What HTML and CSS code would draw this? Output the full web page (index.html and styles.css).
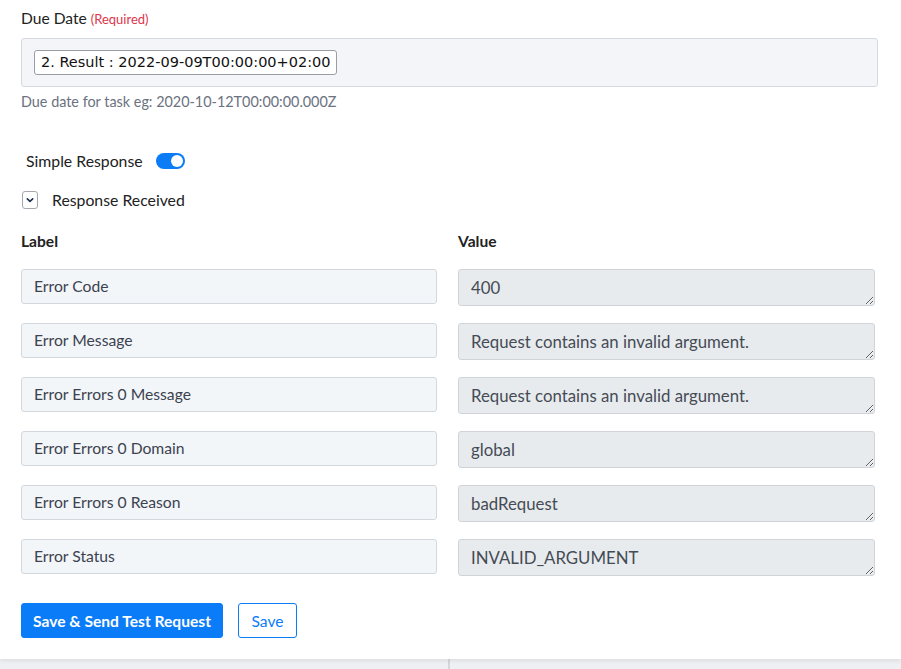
FILE: index.html
```html
<!DOCTYPE html>
<html>
<head>
<meta charset="utf-8">
<link rel="stylesheet" href="styles.css">
</head>
<body>
<div class="card">
  <div class="field">
    <div class="field-label">Due Date <span class="req">(Required)</span></div>
    <div class="token-box"><span class="token">2. Result : 2022-09-09T00:00:00+02:00</span></div>
    <div class="help">Due date for task eg: 2020-10-12T00:00:00.000Z</div>
  </div>

  <div class="toggle-row">
    <span>Simple Response</span>
    <span class="switch"><span class="knob"></span></span>
  </div>

  <div class="collapse-row">
    <span class="chev"><svg width="10" height="10" viewBox="0 0 10 10"><path d="M2.3 3.8 L5 6.4 L7.7 3.8" fill="none" stroke="#1f2d4d" stroke-width="1.6" stroke-linecap="round" stroke-linejoin="round"/></svg></span>
    <span>Response Received</span>
  </div>

  <div class="grid">
    <div class="col-head">Label</div>
    <div class="col-head">Value</div>

    <div class="lbl">Error Code</div>
    <textarea class="val" readonly>400</textarea>

    <div class="lbl">Error Message</div>
    <textarea class="val" readonly>Request contains an invalid argument.</textarea>

    <div class="lbl">Error Errors 0 Message</div>
    <textarea class="val" readonly>Request contains an invalid argument.</textarea>

    <div class="lbl">Error Errors 0 Domain</div>
    <textarea class="val" readonly>global</textarea>

    <div class="lbl">Error Errors 0 Reason</div>
    <textarea class="val" readonly>badRequest</textarea>

    <div class="lbl">Error Status</div>
    <textarea class="val" readonly>INVALID_ARGUMENT</textarea>
  </div>

  <div class="actions">
    <button class="btn primary">Save &amp; Send Test Request</button>
    <button class="btn outline">Save</button>
  </div>
</div>
<div class="below">
  <div class="below-left"></div>
  <div class="below-right"></div>
</div>
</body>
</html>
```

FILE: styles.css
```css
html, body {
  margin: 0;
  padding: 0;
  background: #eef0f3;
  font-family: Lato, "Open Sans", sans-serif;
  color: #2b2f36;
}
.card {
  background: #fff;
  padding: 8px 23px 21px 21px;
  box-shadow: 0 2px 4px rgba(0,0,0,0.08);
  position: relative;
}
.field-label {
  font-size: 15.6px;
  line-height: 20px;
  color: #222;
}
.req {
  font-size: 13px;
  color: #e0354a;
}
.token-box {
  margin-top: 9px;
  background: #f3f5f8;
  border: 1px solid #d6dade;
  border-radius: 3px;
  padding: 11px 12px 11px;
  height: 25px;
}
.token {
  display: inline-block;
  box-sizing: border-box;
  height: 25px;
  line-height: 23px;
  padding: 0 5px 0 6px;
  background: #fff;
  border: 1px solid #9a9ea4;
  border-radius: 3px;
  font-family: "DejaVu Sans", sans-serif;
  font-size: 14.5px;
  color: #111;
  vertical-align: top;
}
.help {
  margin-top: 6px;
  font-size: 14.4px;
  line-height: 18px;
  color: #6b7280;
}
.toggle-row {
  margin-top: 40px;
  margin-left: 5px;
  display: flex;
  align-items: center;
  gap: 13px;
  font-size: 15.8px;
  line-height: 20px;
  color: #222;
}
.switch {
  width: 29px;
  height: 16px;
  border-radius: 8px;
  background: #0b7cf5;
  display: flex;
  align-items: center;
  justify-content: flex-end;
  padding: 0 2px;
  box-sizing: border-box;
}
.knob {
  width: 12px;
  height: 12px;
  border-radius: 50%;
  background: #fff;
}
.collapse-row {
  margin-top: 19px;
  margin-left: 1px;
  display: flex;
  align-items: center;
  gap: 14px;
  font-size: 15.8px;
  line-height: 20px;
  color: #222;
}
.chev {
  width: 14px;
  height: 16px;
  border: 1px solid #a3a8b0;
  border-radius: 3px;
  display: flex;
  align-items: center;
  justify-content: center;
}
.grid {
  margin-top: 21px;
  margin-right: 3px;
  display: grid;
  grid-template-columns: 416px 417px;
  column-gap: 21px;
  row-gap: 17px;
  align-items: start;
}
.col-head {
  font-weight: 700;
  font-size: 15.6px;
  line-height: 20px;
  color: #222;
  margin-bottom: 1px;
}
.lbl {
  box-sizing: border-box;
  height: 35px;
  border: 1px solid #d3d8de;
  border-radius: 3px;
  background: #f3f6f9;
  padding: 0 12px;
  font-size: 15.7px;
  line-height: 33px;
  color: #3c4250;
}
.val {
  box-sizing: border-box;
  width: 417px;
  height: 37px;
  margin: 0;
  border: 1px solid #d0d4d9;
  border-radius: 3px;
  background: #e8ebee;
  padding: 6px 12px;
  font-family: Lato, "Open Sans", sans-serif;
  font-size: 16.8px;
  line-height: 23px;
  color: #454b55;
  resize: vertical;
  overflow: hidden;
  outline: none;
  display: block;
}
.actions {
  margin-top: 27px;
  display: flex;
  gap: 15px;
}
.btn {
  box-sizing: border-box;
  height: 35px;
  border-radius: 3px;
  font-family: Lato, "Open Sans", sans-serif;
  font-size: 15.6px;
  padding: 0;
  white-space: nowrap;
  cursor: pointer;
}
.primary {
  background: #0a7cf8;
  border: 1px solid #0a7cf8;
  color: #fff;
  font-weight: 700;
  width: 202px;
}
.outline {
  background: #fff;
  border: 1px solid #0a7cf8;
  color: #0a7cf8;
  width: 59px;
}
.below {
  display: flex;
  height: 10px;
}
.below-left {
  width: 448px;
  border-right: 2px solid #d3d6db;
}
```
